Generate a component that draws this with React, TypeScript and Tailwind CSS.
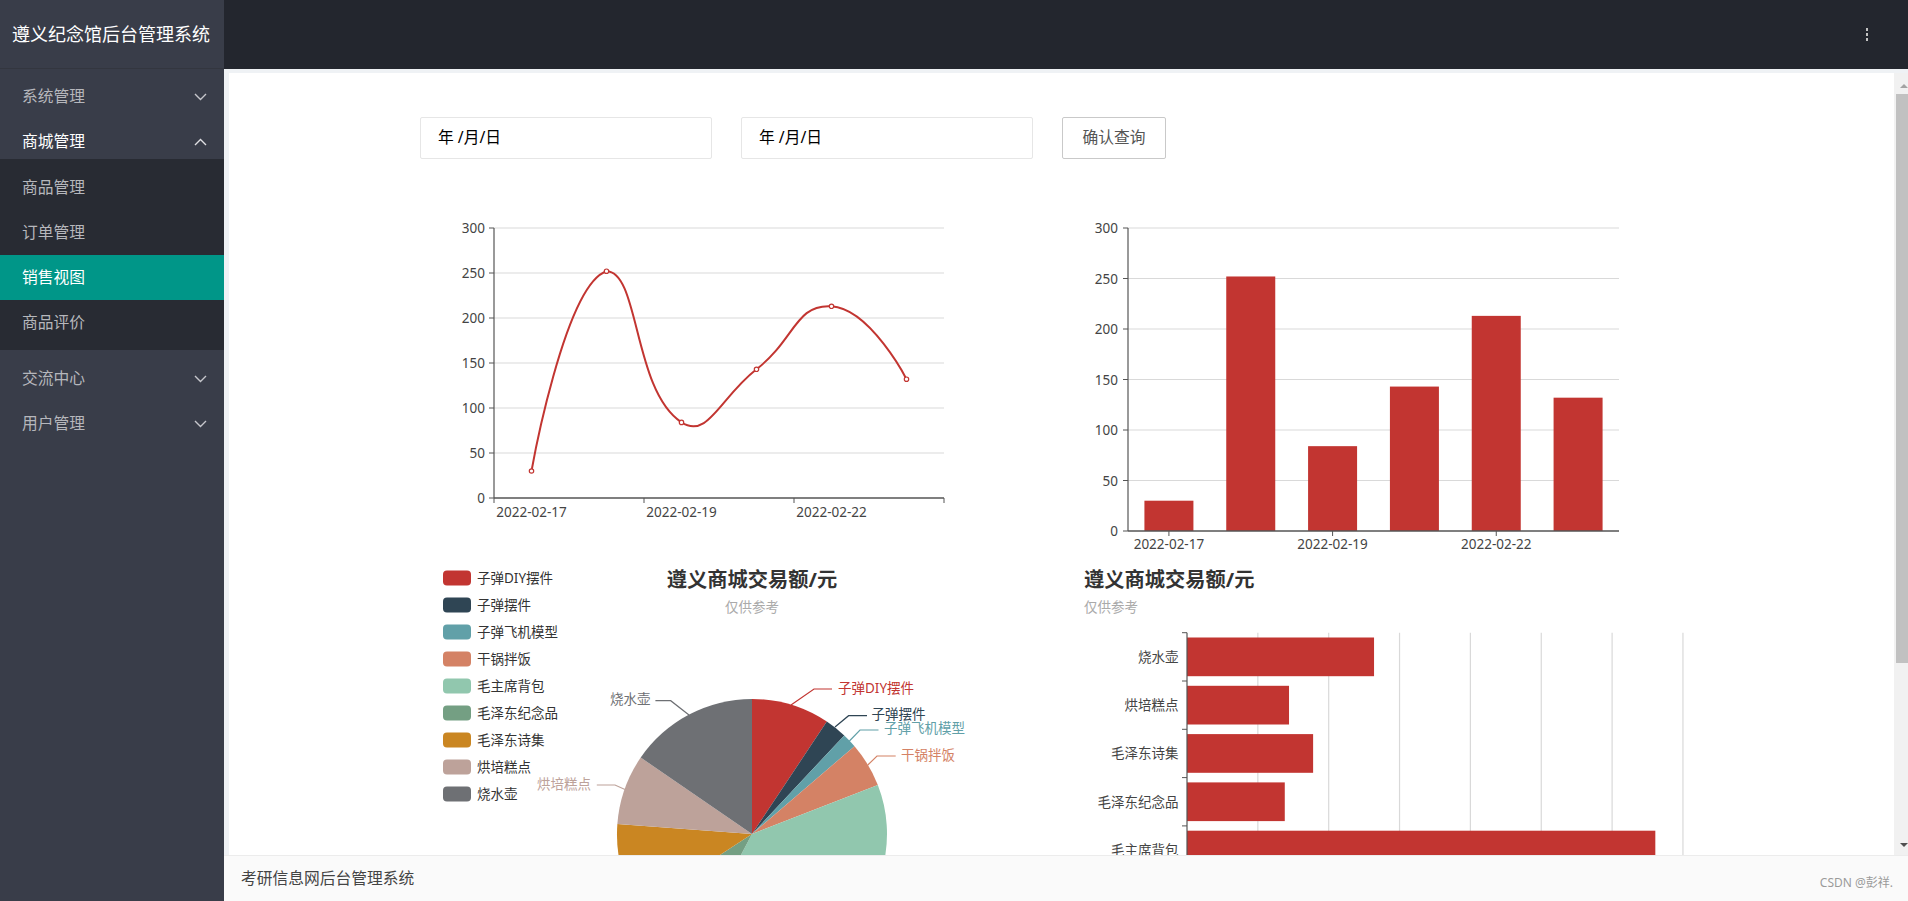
import React from 'react';

const RED = '#c23531';
const PALETTE = ['#c23531', '#2f4554', '#61a0a8', '#d48265', '#91c7ae', '#749f83', '#ca8622', '#bda29a', '#6e7074'];

const goods = ['子弹DIY摆件', '子弹摆件', '子弹飞机模型', '干锅拌饭', '毛主席背包', '毛泽东纪念品', '毛泽东诗集', '烘培糕点', '烧水壶'];
const amounts = [160, 45, 30, 92, 661, 138, 178, 144, 264];

const days = ['2022-02-17', '2022-02-18', '2022-02-19', '2022-02-21', '2022-02-22', '2022-02-23'];
const sales = [30, 252, 84, 143, 213, 132];

type Pt = [number, number];

// same smoothing idea as echarts' line (control points clamped to the points' box)
function smoothPath(pts: Pt[]) {
  const xs = pts.map(p => p[0]);
  const ys = pts.map(p => p[1]);
  const minX = Math.min(...xs), maxX = Math.max(...xs);
  const minY = Math.min(...ys), maxY = Math.max(...ys);
  const clamp = (p: Pt): Pt => [Math.min(Math.max(p[0], minX), maxX), Math.min(Math.max(p[1], minY), maxY)];
  let d = `M${pts[0][0]},${pts[0][1]}`;
  let cp1: Pt = pts[0];
  for (let i = 1; i < pts.length; i++) {
    const p = pts[i];
    let cp0: Pt = p;
    let next: Pt = p;
    if (i < pts.length - 1) {
      const prev = pts[i - 1];
      const nx = pts[i + 1];
      const v = [nx[0] - prev[0], nx[1] - prev[1]];
      const d0 = Math.hypot(p[0] - prev[0], p[1] - prev[1]);
      const d1 = Math.hypot(nx[0] - p[0], nx[1] - p[1]);
      const r = d1 / (d0 + d1);
      cp0 = clamp([p[0] - v[0] * 0.5 * (1 - r), p[1] - v[1] * 0.5 * (1 - r)]);
      next = clamp([p[0] + v[0] * 0.5 * r, p[1] + v[1] * 0.5 * r]);
    }
    d += ` C${cp1[0]},${cp1[1]} ${cp0[0]},${cp0[1]} ${p[0]},${p[1]}`;
    cp1 = next;
  }
  return d;
}

const Chevron = ({ up }: { up?: boolean }) => (
  <svg width="13" height="8" viewBox="0 0 13 8" fill="none" stroke="currentColor" strokeWidth="1.4">
    <polyline points={up ? '1,7 6.5,1.5 12,7' : '1,1 6.5,6.5 12,1'} />
  </svg>
);

const NavItem = ({ label, open, active }: { label: string; open?: boolean; active?: boolean }) => (
  <div className={`flex h-[45px] items-center justify-between pl-[22px] pr-[17px] ${active ? 'text-white' : 'text-[#b6b7bc]'}`}>
    <span>{label}</span>
    <span className="text-[#c6c7cc]"><Chevron up={open} /></span>
  </div>
);

const SubItem = ({ label, active }: { label: string; active?: boolean }) => (
  <div className={`flex h-[45px] items-center pl-[22px] ${active ? 'bg-[#009688] text-white' : 'text-[#b6b7bc]'}`}>
    {label}
  </div>
);

const Sidebar = () => (
  <div className="flex w-[224px] shrink-0 flex-col bg-[#393d49] text-[15.75px]">
    <div className="flex h-[69px] items-center border-b border-[#33363f] pl-[12px] text-[18px] text-white">
      遵义纪念馆后台管理系统
    </div>
    <div className="pt-[5px]">
      <NavItem label="系统管理" />
      <div className="flex h-[40px] items-center justify-between pl-[22px] pr-[17px] pt-[6px] text-white">
        <span>商城管理</span>
        <span className="text-[#e0e0e4]"><Chevron up /></span>
      </div>
      <div className="bg-[#282b33] pt-[6px] pb-[5px]">
        <SubItem label="商品管理" />
        <SubItem label="订单管理" />
        <SubItem label="销售视图" active />
        <SubItem label="商品评价" />
      </div>
      <div className="mt-[6px]">
        <NavItem label="交流中心" />
        <NavItem label="用户管理" />
      </div>
    </div>
  </div>
);

const LineChart = () => {
  const x0 = 74, x1 = 524, y0 = 298, k = 0.9;
  const cw = (x1 - x0) / 6;
  const pts: Pt[] = sales.map((v, i) => [x0 + cw / 2 + cw * i, y0 - v * k]);
  return (
    <svg width="620" height="360" className="block">
      {[0, 50, 100, 150, 200, 250, 300].map(v => (
        <g key={v}>
          {v > 0 && <line x1={x0} x2={x1} y1={y0 - v * k} y2={y0 - v * k} stroke="#d9d9d9" strokeWidth="1.2" />}
          <line x1={x0 - 5} x2={x0} y1={y0 - v * k} y2={y0 - v * k} stroke="#555" />
          <text x={x0 - 9} y={y0 - v * k} textAnchor="end" dominantBaseline="central" fontSize="13.5" fill="#444">{v}</text>
        </g>
      ))}
      <line x1={x0} x2={x0} y1={y0 - 300 * k} y2={y0} stroke="#555" strokeWidth="1.2" />
      <line x1={x0} x2={x1} y1={y0} y2={y0} stroke="#555" strokeWidth="1.4" />
      {[0, 2, 4, 6].map(i => (
        <line key={i} x1={x0 + cw * i} x2={x0 + cw * i} y1={y0} y2={y0 + 5} stroke="#555" />
      ))}
      {[0, 2, 4].map(i => (
        <text key={i} x={x0 + cw / 2 + cw * i} y={y0 + 14} textAnchor="middle" dominantBaseline="central" fontSize="13.5" fill="#444">{days[i]}</text>
      ))}
      <path d={smoothPath(pts)} fill="none" stroke={RED} strokeWidth="2" />
      {pts.map((p, i) => (
        <circle key={i} cx={p[0]} cy={p[1]} r="2.2" fill="#fff" stroke={RED} strokeWidth="1.2" />
      ))}
    </svg>
  );
};

const BarChart = () => {
  const x0 = 88, x1 = 579, y0 = 331, k = 1.01;
  const cw = (x1 - x0) / 6;
  return (
    <svg width="660" height="360" className="block">
      {[0, 50, 100, 150, 200, 250, 300].map(v => (
        <g key={v}>
          {v > 0 && <line x1={x0} x2={x1} y1={y0 - v * k} y2={y0 - v * k} stroke="#d9d9d9" strokeWidth="1.2" />}
          <line x1={x0 - 5} x2={x0} y1={y0 - v * k} y2={y0 - v * k} stroke="#555" />
          <text x={x0 - 10} y={y0 - v * k} textAnchor="end" dominantBaseline="central" fontSize="13.5" fill="#444">{v}</text>
        </g>
      ))}
      {sales.map((v, i) => (
        <rect key={i} x={x0 + cw * i + (cw - 49) / 2} y={y0 - v * k} width="49" height={v * k} fill={RED} />
      ))}
      <line x1={x0} x2={x0} y1={y0 - 300 * k} y2={y0} stroke="#555" strokeWidth="1.2" />
      <line x1={x0} x2={x1} y1={y0} y2={y0} stroke="#555" strokeWidth="1.4" />
      {[0, 2, 4].map(i => (
        <g key={i}>
          <line x1={x0 + cw / 2 + cw * i} x2={x0 + cw / 2 + cw * i} y1={y0} y2={y0 + 5} stroke="#555" />
          <text x={x0 + cw / 2 + cw * i} y={y0 + 13} textAnchor="middle" dominantBaseline="central" fontSize="13.5" fill="#444">{days[i]}</text>
        </g>
      ))}
    </svg>
  );
};

const PieChart = () => {
  const cx = 332, cy = 274, r = 135;
  const total = amounts.reduce((a, b) => a + b, 0);
  const pt = (a: number, rr = r): Pt => [cx + rr * Math.sin(a), cy - rr * Math.cos(a)];
  let acc = 0;
  const slices = amounts.map((v, i) => {
    const a0 = (acc / total) * Math.PI * 2;
    acc += v;
    const a1 = (acc / total) * Math.PI * 2;
    const p0 = pt(a0), p1 = pt(a1);
    const large = a1 - a0 > Math.PI ? 1 : 0;
    return <path key={i} d={`M${cx},${cy} L${p0[0]},${p0[1]} A${r},${r} 0 ${large} 1 ${p1[0]},${p1[1]} Z`} fill={PALETTE[i]} />;
  });
  const labels: { i: number; line: string; x: number; y: number; end?: boolean }[] = [
    { i: 0, line: '371,145 394,129 412,129', x: 418, y: 128 },
    { i: 1, line: '415,167 428.6,155.7 447,155.7', x: 451.6, y: 154 },
    { i: 2, line: '429.4,181 440,170 458.5,170', x: 464, y: 168 },
    { i: 3, line: '447.8,205 457,196 475.7,196', x: 481, y: 195 },
    { i: 8, line: '269,155 250.7,140.7 235.4,140.7', x: 230.4, y: 139, end: true },
    { i: 7, line: '205,229.5 195,225 176.8,225', x: 171, y: 224, end: true },
  ];
  return (
    <svg width="620" height="400" className="block">
      {goods.map((g, i) => (
        <g key={g}>
          <rect x="23" y={18 + 27 * i - 7.5} width="28" height="15" rx="4" fill={PALETTE[i]} />
          <text x="57" y={18 + 27 * i} dominantBaseline="central" fontSize="13.5" fill="#333">{g}</text>
        </g>
      ))}
      <text x={cx} y="19" textAnchor="middle" dominantBaseline="central" fontSize="20.25" fontWeight="bold" fill="#333">遵义商城交易额/元</text>
      <text x={cx} y="47" textAnchor="middle" dominantBaseline="central" fontSize="13.5" fill="#aaa">仅供参考</text>
      {slices}
      {labels.map(l => (
        <g key={l.i}>
          <polyline points={l.line} fill="none" stroke={PALETTE[l.i]} strokeWidth="1.2" />
          <text x={l.x} y={l.y} textAnchor={l.end ? 'end' : 'start'} dominantBaseline="central" fontSize="13.5" fill={PALETTE[l.i]}>{goods[l.i]}</text>
        </g>
      ))}
    </svg>
  );
};

const HBarChart = () => {
  const x0 = 147, top = 72.7, band = 48.3, k = 0.7085, step = 70.85;
  const rows = goods.map((g, i) => ({ g, v: amounts[i] })).reverse();
  return (
    <svg width="660" height="500" className="block">
      <text x="44" y="19" dominantBaseline="central" fontSize="20.25" fontWeight="bold" fill="#333">遵义商城交易额/元</text>
      <text x="44" y="47" dominantBaseline="central" fontSize="13.5" fill="#aaa">仅供参考</text>
      {[1, 2, 3, 4, 5, 6, 7].map(n => (
        <line key={n} x1={x0 + step * n} x2={x0 + step * n} y1={top} y2={top + band * 9} stroke="#d9d9d9" strokeWidth="1.2" />
      ))}
      {rows.map((r, j) => (
        <g key={r.g}>
          <rect x={x0} y={top + band * j + 4.8} width={r.v * k} height={band - 9.6} fill={RED} />
          <line x1={x0 - 5} x2={x0} y1={top + band * j} y2={top + band * j} stroke="#555" />
          <text x={x0 - 8.5} y={top + band * j + band / 2} textAnchor="end" dominantBaseline="central" fontSize="13.5" fill="#444">{r.g}</text>
        </g>
      ))}
      <line x1={x0} x2={x0} y1={top} y2={top + band * 9} stroke="#555" strokeWidth="1.2" />
    </svg>
  );
};

const DateBox = () => (
  <div className="flex h-[42px] w-[292px] items-center rounded-[2px] border border-[#e6e6e6] pl-[17px] text-[15.75px] text-black">
    年 /月/日
  </div>
);

export default function App() {
  return (
    <div className="flex h-[901px] w-[1908px] overflow-hidden bg-white font-['Noto_Sans','Noto_Sans_CJK_SC',sans-serif]">
      <Sidebar />
      <div className="flex min-w-0 flex-1 flex-col">
        <div className="flex h-[69px] shrink-0 items-center justify-end bg-[#23262e] pr-[40px]">
          <div className="flex flex-col gap-[2.5px]">
            <span className="block h-[2.5px] w-[2.5px] bg-[#c2c2c2]" />
            <span className="block h-[2.5px] w-[2.5px] bg-[#c2c2c2]" />
            <span className="block h-[2.5px] w-[2.5px] bg-[#c2c2c2]" />
          </div>
        </div>
        <div className="flex min-h-0 flex-1 bg-[#eff2f5] pt-[4px] pl-[5px]">
          <div className="min-w-0 flex-1 overflow-hidden bg-white pt-[44px] pl-[191px]">
            <div className="flex items-center">
              <DateBox />
              <div className="ml-[29px]"><DateBox /></div>
              <button className="ml-[29px] h-[42px] w-[104px] rounded-[2px] border border-[#c9c9c9] bg-white text-[15.75px] text-[#555]">
                确认查询
              </button>
            </div>
            <div className="mt-[41px] grid grid-cols-[620px_660px] grid-rows-[360px_500px]">
              <LineChart />
              <BarChart />
              <PieChart />
              <HBarChart />
            </div>
          </div>
          <div className="flex w-[14px] shrink-0 flex-col bg-[#f1f1f1]">
            <div className="flex h-[21px] items-center justify-end pt-[4px]">
              <div className="h-0 w-0 border-x-[4px] border-b-[4px] border-x-transparent border-b-[#a3a3a3]" />
            </div>
            <div className="ml-[2px] h-[569px] bg-[#c1c1c1]" />
            <div className="flex-1" />
            <div className="flex h-[12px] items-start justify-end">
              <div className="h-0 w-0 border-x-[4px] border-t-[4px] border-x-transparent border-t-[#505050]" />
            </div>
          </div>
        </div>
        <div className="flex h-[46px] shrink-0 items-center justify-between border-t border-[#ececec] bg-[#fafafa] pl-[17px] pr-[15px]">
          <span className="text-[15.75px] text-[#444]">考研信息网后台管理系统</span>
          <span className="pt-[8px] text-[12px] text-[#9a9a9a]">CSDN @彭祥.</span>
        </div>
      </div>
    </div>
  );
}
